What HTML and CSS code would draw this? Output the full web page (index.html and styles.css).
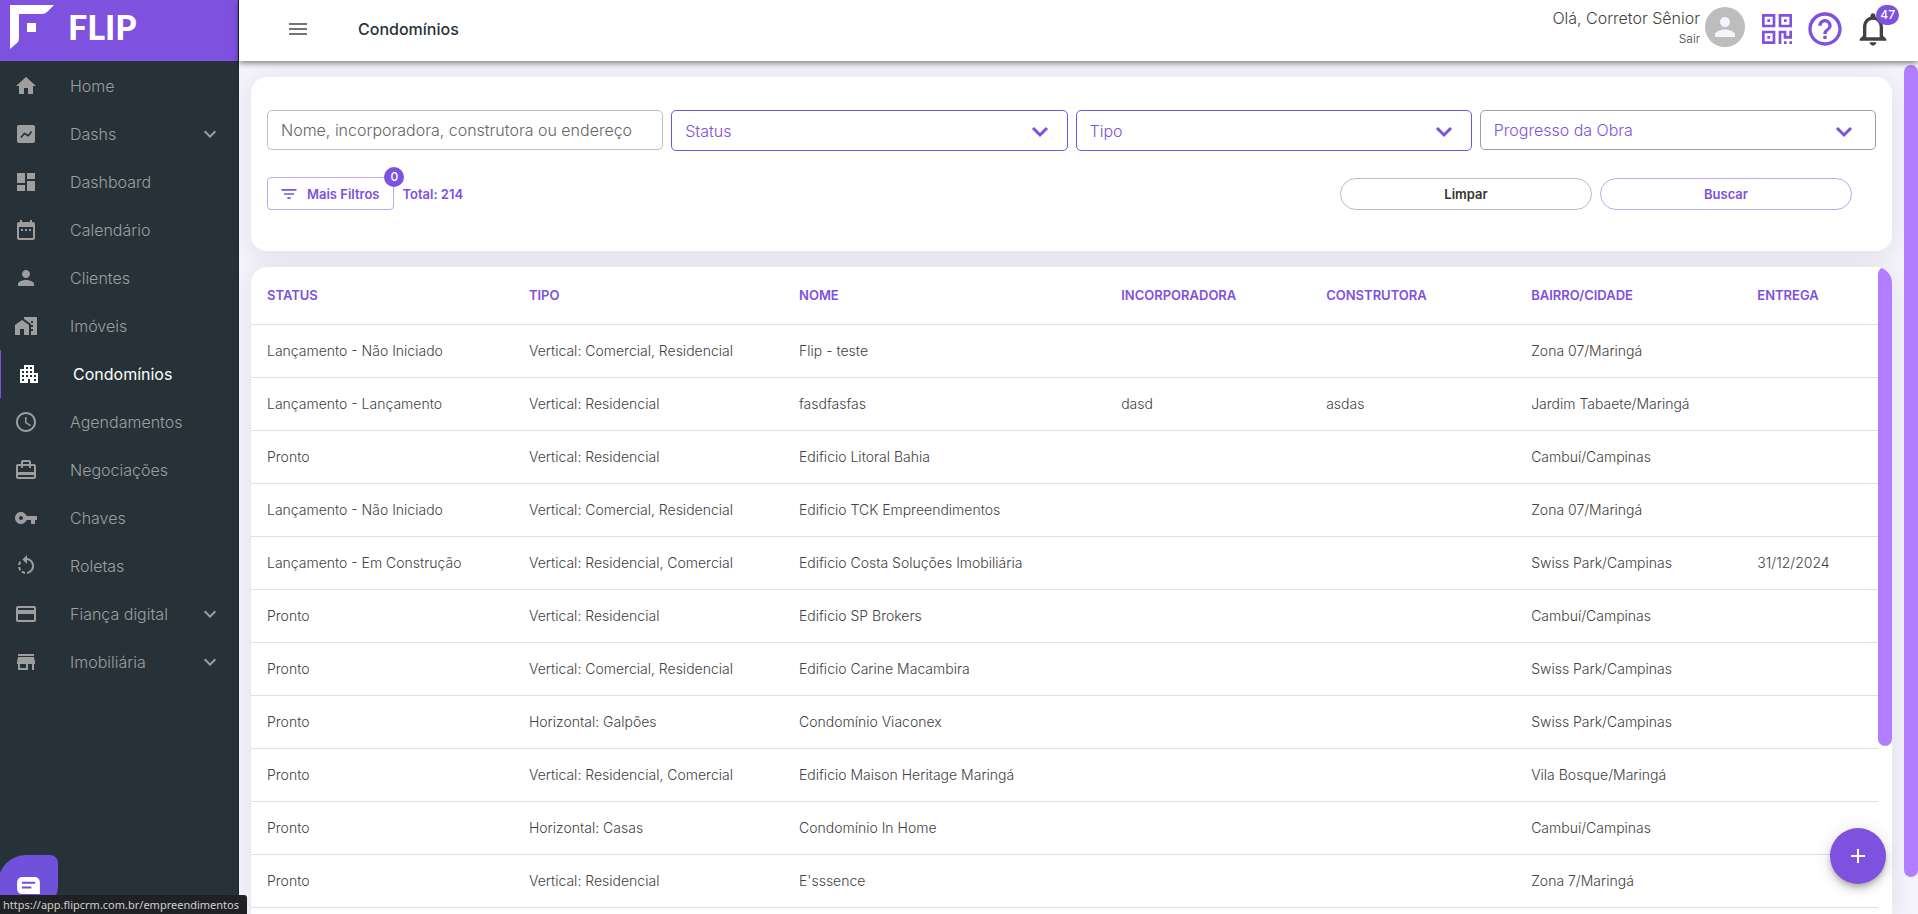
FILE: index.html
```html
<!DOCTYPE html>
<html lang="pt-BR">
<head>
    <meta charset="UTF-8">
    <meta name="viewport" content="width=device-width, initial-scale=1.0">
    <title>Condomínios</title>
    <link rel="stylesheet" href="styles.css">
</head>
<body>
    <aside class="sidebar">
        <a class="brand" href="#">
            <svg class="brand-mark" viewBox="0 0 44 44"><path d="M0 0h44l-7 7q-2 2-5 2H9v24q0 3-2 5l-7 6z"/><path d="M17 18h9v9h-9z"/></svg>
            <span class="brand-name">FLIP</span>
        </a>
        <nav class="menu">
            <a class="menu-item" href="#"><svg class="icon" viewBox="0 0 24 24"><path d="M10 20v-6h4v6h5v-8h3L12 3 2 12h3v8z"/></svg><span>Home</span></a>
            <a class="menu-item" href="#"><svg class="icon" viewBox="0 0 24 24"><path fill-rule="evenodd" d="M19 3H5c-1.1 0-2 .9-2 2v14c0 1.100.9 2 2 2h14c1.100 0 2-.9 2-2V5c0-1.100-.9-2-2-2zM7.400 16.200L6.300 15.100 10.200 10.400 14.200 12.600 17 9 18.200 10.100 14.600 14.700 10.600 12.500z"/></svg><span>Dashs</span><svg class="icon arrow" viewBox="0 0 24 24"><path d="M16.590 8.590L12 13.170 7.410 8.590 6 10l6 6 6-6z"/></svg></a>
            <a class="menu-item" href="#"><svg class="icon" viewBox="0 0 24 24"><path d="M3 13h8V3H3v10zm0 8h8v-6H3v6zm10 0h8V11h-8v10zm0-18v6h8V3h-8z"/></svg><span>Dashboard</span></a>
            <a class="menu-item" href="#"><svg class="icon" viewBox="0 0 24 24"><path d="M9 11H7v2h2v-2zm4 0h-2v2h2v-2zm4 0h-2v2h2v-2zm2-7h-1V2h-2v2H8V2H6v2H5c-1.110 0-1.990.9-1.990 2L3 20c0 1.100.89 2 2 2h14c1.100 0 2-.9 2-2V6c0-1.100-.9-2-2-2zm0 16H5V9h14v11z"/></svg><span>Calendário</span></a>
            <a class="menu-item" href="#"><svg class="icon" viewBox="0 0 24 24"><path d="M12 12c2.210 0 4-1.790 4-4s-1.790-4-4-4-4 1.790-4 4 1.790 4 4 4zm0 2c-2.670 0-8 1.340-8 4v2h16v-2c0-2.660-5.330-4-8-4z"/></svg><span>Clientes</span></a>
            <a class="menu-item" href="#"><svg class="icon" viewBox="0 0 24 24"><path d="M1 11v10h5v-6h4v6h5V11L8 6z"/><path d="M10 3v1.970l7 5V11h2v2h-2v2h2v2h-2v4h6V3H10zm9 6h-2V7h2v2z"/></svg><span>Imóveis</span></a>
            <a class="menu-item active" href="#"><svg class="icon" viewBox="0 0 24 24"><path d="M17 11V3H7v4H3v14h8v-4h2v4h8V11h-4zM7 19H5v-2h2v2zm0-4H5v-2h2v2zm0-4H5V9h2v2zm4 4H9v-2h2v2zm0-4H9V9h2v2zm0-4H9V5h2v2zm4 8h-2v-2h2v2zm0-4h-2V9h2v2zm0-4h-2V5h2v2zm4 12h-2v-2h2v2zm0-4h-2v-2h2v2z"/></svg><span>Condomínios</span></a>
            <a class="menu-item" href="#"><svg class="icon" viewBox="0 0 24 24"><path d="M11.990 2C6.470 2 2 6.480 2 12s4.470 10 9.990 10C17.520 22 22 17.520 22 12S17.520 2 11.990 2zM12 20c-4.420 0-8-3.580-8-8s3.580-8 8-8 8 3.580 8 8-3.580 8-8 8zM12.500 7H11v6l5.250 3.150.75-1.230-4.500-2.670z"/></svg><span>Agendamentos</span></a>
            <a class="menu-item" href="#"><svg class="icon" viewBox="0 0 24 24"><path d="M20 6h-3V4c0-1.110-.89-2-2-2H9c-1.110 0-2 .89-2 2v2H4c-1.110 0-2 .89-2 2v11c0 1.110.89 2 2 2h16c1.110 0 2-.89 2-2V8c0-1.110-.89-2-2-2zM9 4h6v2H9V4zm11 15H4v-2h16v2zm0-5H4V8h3v2h2V8h6v2h2V8h3v6z"/></svg><span>Negociações</span></a>
            <a class="menu-item" href="#"><svg class="icon" viewBox="0 0 24 24"><path d="M12.650 10C11.830 7.670 9.610 6 7 6c-3.310 0-6 2.690-6 6s2.690 6 6 6c2.610 0 4.830-1.670 5.650-4H17v4h4v-4h2v-4H12.650zM7 14c-1.100 0-2-.9-2-2s.9-2 2-2 2 .9 2 2-.9 2-2 2z"/></svg><span>Chaves</span></a>
            <a class="menu-item" href="#"><svg class="icon" viewBox="0 0 24 24"><path d="M7.110 8.530L5.700 7.110C4.800 8.270 4.240 9.610 4.070 11h2.020c.14-.87.49-1.720 1.020-2.470zM6.090 13H4.070c.17 1.390.72 2.730 1.620 3.890l1.410-1.420c-.52-.75-.87-1.590-1.010-2.470zm1.010 5.320c1.160.9 2.510 1.440 3.900 1.610V17.900c-.87-.15-1.710-.49-2.460-1.030L7.100 18.320zM13 4.070V1L8.450 5.550 13 10V6.090c2.840.48 5 2.940 5 5.910s-2.160 5.430-5 5.910v2.020c3.950-.49 7-3.850 7-7.930s-3.050-7.440-7-7.930z"/></svg><span>Roletas</span></a>
            <a class="menu-item" href="#"><svg class="icon" viewBox="0 0 24 24"><path d="M20 4H4c-1.110 0-1.990.89-1.990 2L2 18c0 1.110.89 2 2 2h16c1.110 0 2-.89 2-2V6c0-1.110-.89-2-2-2zm0 14H4v-6h16v6zm0-10H4V6h16v2z"/></svg><span>Fiança digital</span><svg class="icon arrow" viewBox="0 0 24 24"><path d="M16.590 8.590L12 13.170 7.410 8.590 6 10l6 6 6-6z"/></svg></a>
            <a class="menu-item" href="#"><svg class="icon" viewBox="0 0 24 24"><path d="M20 4H4v2h16V4zm1 10v-2l-1-5H4l-1 5v2h1v6h10v-6h4v6h2v-6h1zm-9 4H6v-4h6v4z"/></svg><span>Imobiliária</span><svg class="icon arrow" viewBox="0 0 24 24"><path d="M16.590 8.590L12 13.170 7.410 8.590 6 10l6 6 6-6z"/></svg></a>
        </nav>
    </aside>

    <div class="page">
        <header class="topbar">
            <button class="icon-button menu-toggle" type="button" aria-label="Menu"><svg class="icon" viewBox="0 0 24 24"><path d="M3 18h18v-2H3v2zm0-5h18v-2H3v2zm0-7v2h18V6H3z"/></svg></button>
            <h1 class="title">Condomínios</h1>
            <div class="user">
                <span class="user-name">Olá, Corretor Sênior</span>
                <a class="logout" href="#">Sair</a>
            </div>
            <div class="avatar"><svg viewBox="0 0 24 24"><path d="M12 12c2.210 0 4-1.790 4-4s-1.790-4-4-4-4 1.790-4 4 1.790 4 4 4zm0 2c-2.670 0-8 1.340-8 4v2h16v-2c0-2.660-5.330-4-8-4z"/></svg></div>
            <div class="actions">
                <button class="icon-button" type="button" aria-label="QR Code"><svg class="icon-large" viewBox="0 0 24 24"><path d="M3 11h8V3H3v8zm1.600-6.400h4.800v4.800H4.600V4.600zM13 3v8h8V3h-8zm6.400 6.400h-4.800V4.600h4.800v4.800zM3 21h8v-8H3v8zm1.600-6.400h4.800v4.800H4.600v-4.800zM6.200 6.200h1.600v1.600H6.200zM16.200 6.200h1.600v1.600h-1.600zM6.200 16.200h1.600v1.600H6.200zM13 13h4.600v3h1.800v-3H21v4.800h-5v-3.200h-1.400V21H13zM16.200 19.400h1.600V21h-1.600zM19.400 19.400H21V21h-1.600z"/></svg></button>
                <button class="icon-button" type="button" aria-label="Ajuda"><svg class="icon-large" viewBox="0 0 24 24"><path d="M11 18h2v-2h-2v2zm1-16C6.480 2 2 6.480 2 12s4.480 10 10 10 10-4.480 10-10S17.520 2 12 2zm0 18c-4.410 0-8-3.590-8-8s3.590-8 8-8 8 3.590 8 8-3.590 8-8 8zm0-14c-2.210 0-4 1.790-4 4h2c0-1.100.9-2 2-2s2 .9 2 2c0 2-3 1.750-3 5h2c0-2.250 3-2.500 3-5 0-2.210-1.790-4-4-4z"/></svg></button>
                <button class="icon-button bell" type="button" aria-label="Notificações"><svg class="icon-large" viewBox="0 0 24 24"><path d="M12 22c1.100 0 2-.9 2-2h-4c0 1.100.9 2 2 2zm6-6v-5c0-3.070-1.630-5.640-4.500-6.320V4c0-.83-.67-1.500-1.500-1.500s-1.500.67-1.500 1.500v.68C7.640 5.360 6 7.920 6 11v5l-2 2v1h16v-1l-2-2zm-2 1H8v-6c0-2.480 1.510-4.500 4-4.500s4 2.020 4 4.500v6z"/></svg><span class="badge bell-badge">47</span></button>
            </div>
        </header>

        <div class="scroll-area">
            <main class="content">
                <form class="card filters">
                    <div class="fields">
                        <input class="field" type="text" aria-label="Buscar condomínio" placeholder="Nome, incorporadora, construtora ou endereço">
                        <div class="select">
                            <select class="field field-purple" aria-label="Status"><option>Status</option></select>
                            <svg class="icon select-arrow" viewBox="0 0 24 24"><path d="M5 9l7 7 7-7"/></svg>
                        </div>
                        <div class="select">
                            <select class="field field-purple" aria-label="Tipo"><option>Tipo</option></select>
                            <svg class="icon select-arrow" viewBox="0 0 24 24"><path d="M5 9l7 7 7-7"/></svg>
                        </div>
                        <div class="select">
                            <select class="field field-grey" aria-label="Progresso da Obra"><option>Progresso da Obra</option></select>
                            <svg class="icon select-arrow" viewBox="0 0 24 24"><path d="M5 9l7 7 7-7"/></svg>
                        </div>
                    </div>
                    <div class="filter-actions">
                        <button class="button more-filters" type="button"><svg class="filter-icon" viewBox="0 0 24 24"><path d="M10 18h4v-2h-4v2zM3 6v2h18V6H3zm3 7h12v-2H6v2z"/></svg>Mais Filtros<span class="badge filter-badge">0</span></button>
                        <span class="total">Total: 214</span>
                        <button class="button pill clear" type="reset">Limpar</button>
                        <button class="button pill" type="submit">Buscar</button>
                    </div>
                </form>

                <section class="card results">
                    <table class="table">
                        <colgroup>
                            <col class="col-status"><col class="col-tipo"><col class="col-nome"><col class="col-empresa"><col class="col-empresa"><col class="col-bairro"><col>
                        </colgroup>
                        <thead>
                            <tr><th>STATUS</th><th>TIPO</th><th>NOME</th><th>INCORPORADORA</th><th>CONSTRUTORA</th><th>BAIRRO/CIDADE</th><th>ENTREGA</th></tr>
                        </thead>
                        <tbody>
                            <tr><td>Lançamento - Não Iniciado</td><td>Vertical: Comercial, Residencial</td><td>Flip - teste</td><td></td><td></td><td>Zona 07/Maringá</td><td></td></tr>
                            <tr><td>Lançamento - Lançamento</td><td>Vertical: Residencial</td><td>fasdfasfas</td><td>dasd</td><td>asdas</td><td>Jardim Tabaete/Maringá</td><td></td></tr>
                            <tr><td>Pronto</td><td>Vertical: Residencial</td><td>Edificio Litoral Bahia</td><td></td><td></td><td>Cambuí/Campinas</td><td></td></tr>
                            <tr><td>Lançamento - Não Iniciado</td><td>Vertical: Comercial, Residencial</td><td>Edificio TCK Empreendimentos</td><td></td><td></td><td>Zona 07/Maringá</td><td></td></tr>
                            <tr><td>Lançamento - Em Construção</td><td>Vertical: Residencial, Comercial</td><td>Edificio Costa Soluções Imobiliária</td><td></td><td></td><td>Swiss Park/Campinas</td><td>31/12/2024</td></tr>
                            <tr><td>Pronto</td><td>Vertical: Residencial</td><td>Edificio SP Brokers</td><td></td><td></td><td>Cambuí/Campinas</td><td></td></tr>
                            <tr><td>Pronto</td><td>Vertical: Comercial, Residencial</td><td>Edificio Carine Macambira</td><td></td><td></td><td>Swiss Park/Campinas</td><td></td></tr>
                            <tr><td>Pronto</td><td>Horizontal: Galpões</td><td>Condomínio Viaconex</td><td></td><td></td><td>Swiss Park/Campinas</td><td></td></tr>
                            <tr><td>Pronto</td><td>Vertical: Residencial, Comercial</td><td>Edificio Maison Heritage Maringá</td><td></td><td></td><td>Vila Bosque/Maringá</td><td></td></tr>
                            <tr><td>Pronto</td><td>Horizontal: Casas</td><td>Condomínio In Home</td><td></td><td></td><td>Cambuí/Campinas</td><td></td></tr>
                            <tr><td>Pronto</td><td>Vertical: Residencial</td><td>E'sssence</td><td></td><td></td><td>Zona 7/Maringá</td><td></td></tr>
                        </tbody>
                    </table>
                    <div class="scrollbar"><div class="thumb table-thumb"></div></div>
                </section>
            </main>
            <div class="scrollbar page-scrollbar"><div class="thumb page-thumb"></div></div>
        </div>
    </div>

    <button class="fab" type="button" aria-label="Adicionar"><svg class="icon" viewBox="0 0 24 24"><path d="M19 13h-6v6h-2v-6H5v-2h6V5h2v6h6v2z"/></svg></button>
    <button class="chat" type="button" aria-label="Chat"><svg class="chat-icon" viewBox="0 0 24 20"><path fill-rule="evenodd" d="M6 0h12q6 0 6 6v12H6q-6 0-6-6V6q0-6 6-6zM5 5v2h14V5zm0 5v2h10v-2z"/></svg></button>
    <div class="status-url">https://app.flipcrm.com.br/empreendimentos</div>
</body>
</html>
```
FILE: styles.css
```css
* {
    margin: 0;
    padding: 0;
    box-sizing: border-box;
}

body {
    display: flex;
    height: 100vh;
    overflow: hidden;
    font-family: Inter, "Open Sans", sans-serif;
    font-weight: 300;
    font-size: 14px;
    color: #424242;
    background: #f5f4fb;
}

a {
    color: inherit;
    text-decoration: none;
}

button,
input,
select {
    font: inherit;
    background: none;
    border: none;
}

button {
    cursor: pointer;
}

svg {
    flex-shrink: 0;
    fill: currentColor;
}

.icon {
    width: 24px;
    height: 24px;
}

.icon-large {
    width: 40px;
    height: 40px;
}

/* Menu lateral */
.sidebar {
    width: 239px;
    flex-shrink: 0;
    background: #263238;
    border-right: 1px solid #1f282d;
}

.brand {
    display: flex;
    height: 61px;
    padding: 5px 10px;
    gap: 14px;
    background: #7e51de;
    color: #fff;
}

.brand-mark {
    width: 44px;
    height: 44px;
}

.brand-name {
    font-family: Lato, sans-serif;
    font-size: 34px;
    font-weight: 900;
    line-height: 44px;
}

.menu {
    padding-top: 1px;
}

.menu-item {
    display: flex;
    align-items: center;
    height: 48px;
    padding: 0 16px 0 14px;
    gap: 32px;
    font-size: 16px;
    white-space: nowrap;
    color: #9e9e9e;
}

.menu-item.active {
    padding-left: 16px;
    border-left: 1px solid #7e51de;
    color: #fff;
    font-weight: 400;
}

.menu-item .arrow {
    margin-left: auto;
}

.menu-item span {
    flex: 1;
    min-width: 0;
}

.menu-item span + .arrow {
    margin-left: -32px;
}

/* Topo */
.page {
    flex: 1;
    min-width: 0;
    display: flex;
    flex-direction: column;
}

.topbar {
    display: flex;
    height: 61px;
    padding: 0 25px 3px 47px;
    align-items: center;
    background: #fff;
    box-shadow: 0 2px 6px rgba(0, 0, 0, 0.5);
    z-index: 1;
}

.icon-button {
    display: flex;
    color: #7e51de;
}

.menu-toggle {
    color: #757575;
}

.title {
    margin-left: 48px;
    font-size: 16px;
    font-weight: 500;
    color: #263238;
}

.user {
    display: flex;
    flex-direction: column;
    align-items: flex-end;
    margin-left: auto;
    margin-right: 5px;
}

.user-name {
    font-size: 16px;
    line-height: 20px;
}

.logout {
    font-size: 12px;
    line-height: 22px;
}

.avatar {
    display: flex;
    width: 40px;
    height: 40px;
    margin-right: 12px;
    margin-bottom: 4px;
    align-items: center;
    justify-content: center;
    border-radius: 50%;
    background: #bdbdbd;
    color: #f5f4fb;
}

.avatar svg {
    width: 30px;
    height: 30px;
}

.actions {
    display: flex;
    gap: 8px;
}

.bell {
    position: relative;
    color: #424242;
}

.badge {
    position: absolute;
    min-width: 20px;
    height: 20px;
    padding: 0 4px;
    border-radius: 10px;
    background: #7e51de;
    color: #fff;
    font-size: 12px;
    font-weight: 500;
    line-height: 20px;
    text-align: center;
}

.bell-badge {
    top: -4px;
    right: -6px;
}

/* Conteudo */
.scroll-area {
    flex: 1;
    min-height: 0;
    display: flex;
}

.content {
    flex: 1;
    min-width: 0;
    display: flex;
    flex-direction: column;
    gap: 16px;
    padding: 16px 12px 0;
}

.card {
    background: #fff;
    border-radius: 16px;
    box-shadow: 0 4px 24px rgba(30, 30, 60, 0.1);
}

.filters {
    padding: 33px 16px 41px;
}

.fields {
    display: grid;
    grid-template-columns: repeat(4, 1fr);
    align-items: start;
    gap: 8px;
}

.field {
    display: block;
    width: 100%;
    height: 40px;
    padding: 0 13px;
    border: 1px solid #bdbdbd;
    border-radius: 5px;
    font-size: 16px;
    color: #7e51de;
    appearance: none;
}

.field::placeholder {
    color: #666;
}

.field-purple {
    height: 41px;
    border-color: #7e51de;
}

.field-grey {
    border-color: #9e9e9e;
}

.select {
    position: relative;
}

.select-arrow {
    position: absolute;
    top: 9px;
    right: 20px;
    fill: none;
    stroke: #7e51de;
    stroke-width: 3;
    pointer-events: none;
}

.field-purple + .select-arrow {
    right: 16px;
}

.filter-actions {
    display: flex;
    align-items: center;
    gap: 8px;
    margin-top: 26px;
    padding-right: 24px;
}

.button {
    height: 32px;
    border: 1px solid #bea8ee;
    color: #7e51de;
    font-size: 13px;
    font-weight: 600;
}

.more-filters {
    position: relative;
    display: flex;
    align-items: center;
    height: 33px;
    padding: 0 14px 0 11px;
    gap: 8px;
    border-radius: 4px;
}

.filter-icon {
    width: 20px;
    height: 20px;
}

.filter-badge {
    top: -11px;
    right: -11px;
}

.total {
    margin-right: auto;
    color: #7e51de;
    font-size: 13px;
    font-weight: 600;
}

.pill {
    width: 252px;
    border-radius: 16px;
}

.clear {
    border-color: #bdbdbd;
    color: #333;
}

/* Tabela */
.results {
    flex: 1;
    min-height: 0;
    display: flex;
    overflow: hidden;
    border-radius: 16px 16px 0 0;
}

.table {
    flex: 1;
    align-self: flex-start;
    border-collapse: collapse;
    table-layout: fixed;
}

.table th,
.table td {
    height: 53px;
    padding: 0 16px;
    border-bottom: 1px solid #e0e0e0;
    text-align: left;
    white-space: nowrap;
}

.table th {
    height: 57px;
    color: #7e51de;
    font-size: 13px;
    font-weight: 600;
}

.col-status {
    width: 16.1%;
}

.col-tipo {
    width: 16.6%;
}

.col-nome {
    width: 19.8%;
}

.col-empresa {
    width: 12.6%;
}

.col-bairro {
    width: 13.9%;
}

/* Barras de rolagem */
.scrollbar {
    width: 14px;
    flex-shrink: 0;
}

.page-scrollbar {
    padding-top: 4px;
}

.thumb {
    border-radius: 7px;
    background: #b27eff;
}

.table-thumb {
    height: 74%;
}

.page-thumb {
    height: calc(100% - 37px);
}

/* Botoes flutuantes */
.fab {
    position: fixed;
    right: 32px;
    bottom: 30px;
    display: flex;
    align-items: center;
    justify-content: center;
    width: 56px;
    height: 56px;
    border-radius: 50%;
    background: #7e51de;
    color: #fff;
    box-shadow: 0 3px 5px -1px rgba(0, 0, 0, 0.2), 0 6px 10px rgba(0, 0, 0, 0.14), 0 1px 18px rgba(0, 0, 0, 0.12);
    z-index: 2;
}

.chat {
    position: fixed;
    left: -2px;
    bottom: 0;
    display: flex;
    align-items: flex-start;
    width: 60px;
    height: 59px;
    padding: 22px 18px 0 19px;
    border-radius: 28px 8px 28px 0;
    background: #6f52d9;
    color: #fff;
    z-index: 2;
}

.chat-icon {
    width: 23px;
    height: 19px;
}

.status-url {
    position: fixed;
    left: 0;
    bottom: 0;
    height: 19px;
    padding: 0 8px 0 3px;
    border-top-right-radius: 3px;
    background: #202124;
    color: #d0d0d0;
    font-family: "Noto Sans", sans-serif;
    font-size: 11px;
    font-weight: 400;
    line-height: 20px;
    z-index: 3;
}
```
